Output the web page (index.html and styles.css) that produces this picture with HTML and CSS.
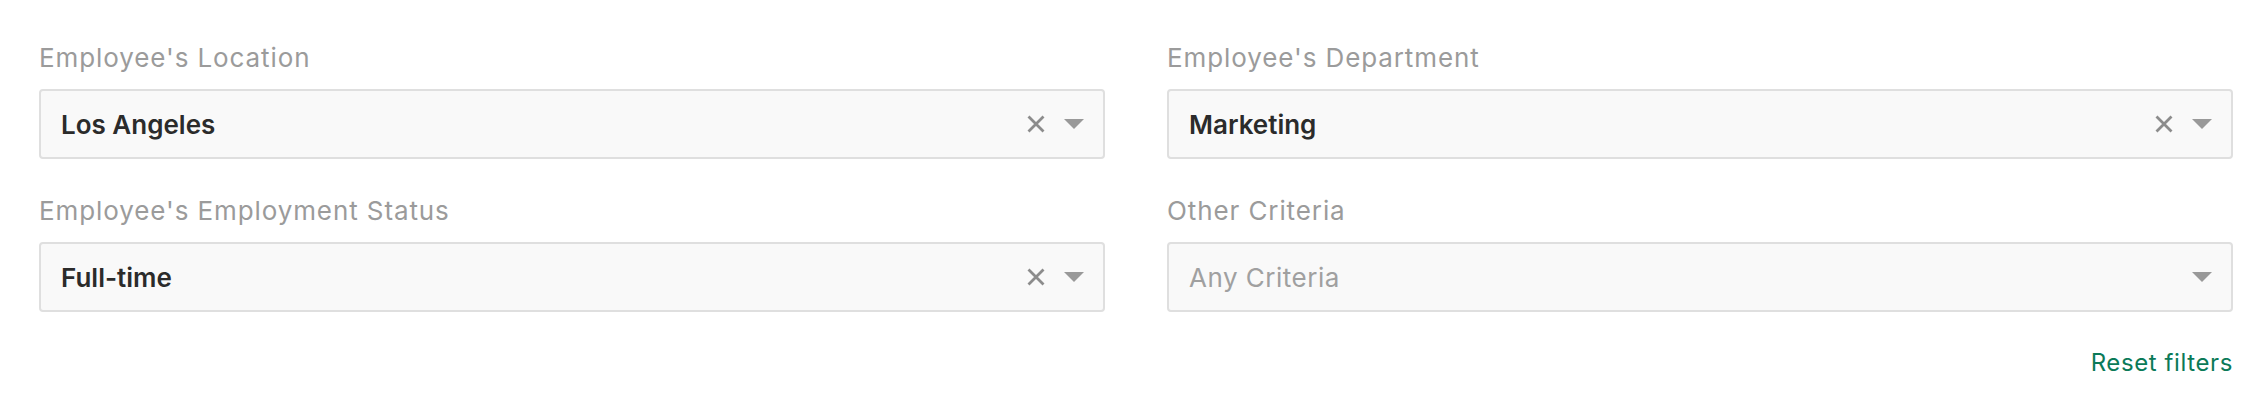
FILE: index.html
```html
<html>
  <head>
    <title>Report Filters</title>
    <link rel="stylesheet" href="styles.css">
  </head>
  <body>
    <div class="filters">
      <div class="filter-grid">
        <div class="field">
          <div class="field-label">Employee's Location</div>
          <div class="select-box">
            <span class="select-value">Los Angeles</span>
            <span class="select-clear">
              <svg width="18" height="18" viewBox="0 0 18 18"><path d="M1.5 1.5 L16.5 16.5 M16.5 1.5 L1.5 16.5" stroke="#8c8c8c" stroke-width="2.8" /></svg>
            </span>
            <span class="select-arrow"></span>
          </div>
        </div>

        <div class="field">
          <div class="field-label">Employee's Department</div>
          <div class="select-box">
            <span class="select-value">Marketing</span>
            <span class="select-clear">
              <svg width="18" height="18" viewBox="0 0 18 18"><path d="M1.5 1.5 L16.5 16.5 M16.5 1.5 L1.5 16.5" stroke="#8c8c8c" stroke-width="2.8" /></svg>
            </span>
            <span class="select-arrow"></span>
          </div>
        </div>

        <div class="field">
          <div class="field-label">Employee's Employment Status</div>
          <div class="select-box">
            <span class="select-value">Full-time</span>
            <span class="select-clear">
              <svg width="18" height="18" viewBox="0 0 18 18"><path d="M1.5 1.5 L16.5 16.5 M16.5 1.5 L1.5 16.5" stroke="#8c8c8c" stroke-width="2.8" /></svg>
            </span>
            <span class="select-arrow"></span>
          </div>
        </div>

        <div class="field">
          <div class="field-label">Other Criteria</div>
          <div class="select-box">
            <span class="select-value placeholder">Any Criteria</span>
            <span class="select-arrow"></span>
          </div>
        </div>
      </div>

      <div class="filter-actions">
        <a class="reset-link" href="#">Reset filters</a>
      </div>
    </div>
  </body>
</html>
```

FILE: styles.css
```css
body { margin: 0; background: #fff; font-family: Inter, "Liberation Sans", sans-serif; }
.filters { padding: 42px 35px 0 39px; }
.filter-grid {
  display: grid;
  grid-template-columns: 1fr 1fr;
  column-gap: 62px;
  row-gap: 36px;
}
.field-label {
  font-size: 26px; line-height: 32px; letter-spacing: 0.9px;
  color: #9b9b9b;
  margin-bottom: 15px;
}
.select-box {
  height: 70px; box-sizing: border-box;
  border: 2px solid #dfdfdf; border-radius: 4px;
  background: #f9f9f9;
  display: flex; align-items: center;
  padding: 0 19px 0 20px;
}
.select-value { flex: 1; font-size: 26px; font-weight: 600; color: #2b2b2b; }
.select-value.placeholder { font-weight: 400; color: #a0a0a0; letter-spacing: 0.5px; }
.select-clear { display: flex; margin-right: 19px; }
.select-arrow {
  width: 0; height: 0;
  border-left: 10px solid transparent;
  border-right: 10px solid transparent;
  border-top: 10px solid #999;
}
.filter-actions { display: flex; justify-content: flex-end; margin-top: 36px; }
.reset-link { font-size: 24px; line-height: 30px; letter-spacing: 0.6px; color: #0b7a58; text-decoration: none; }
```
